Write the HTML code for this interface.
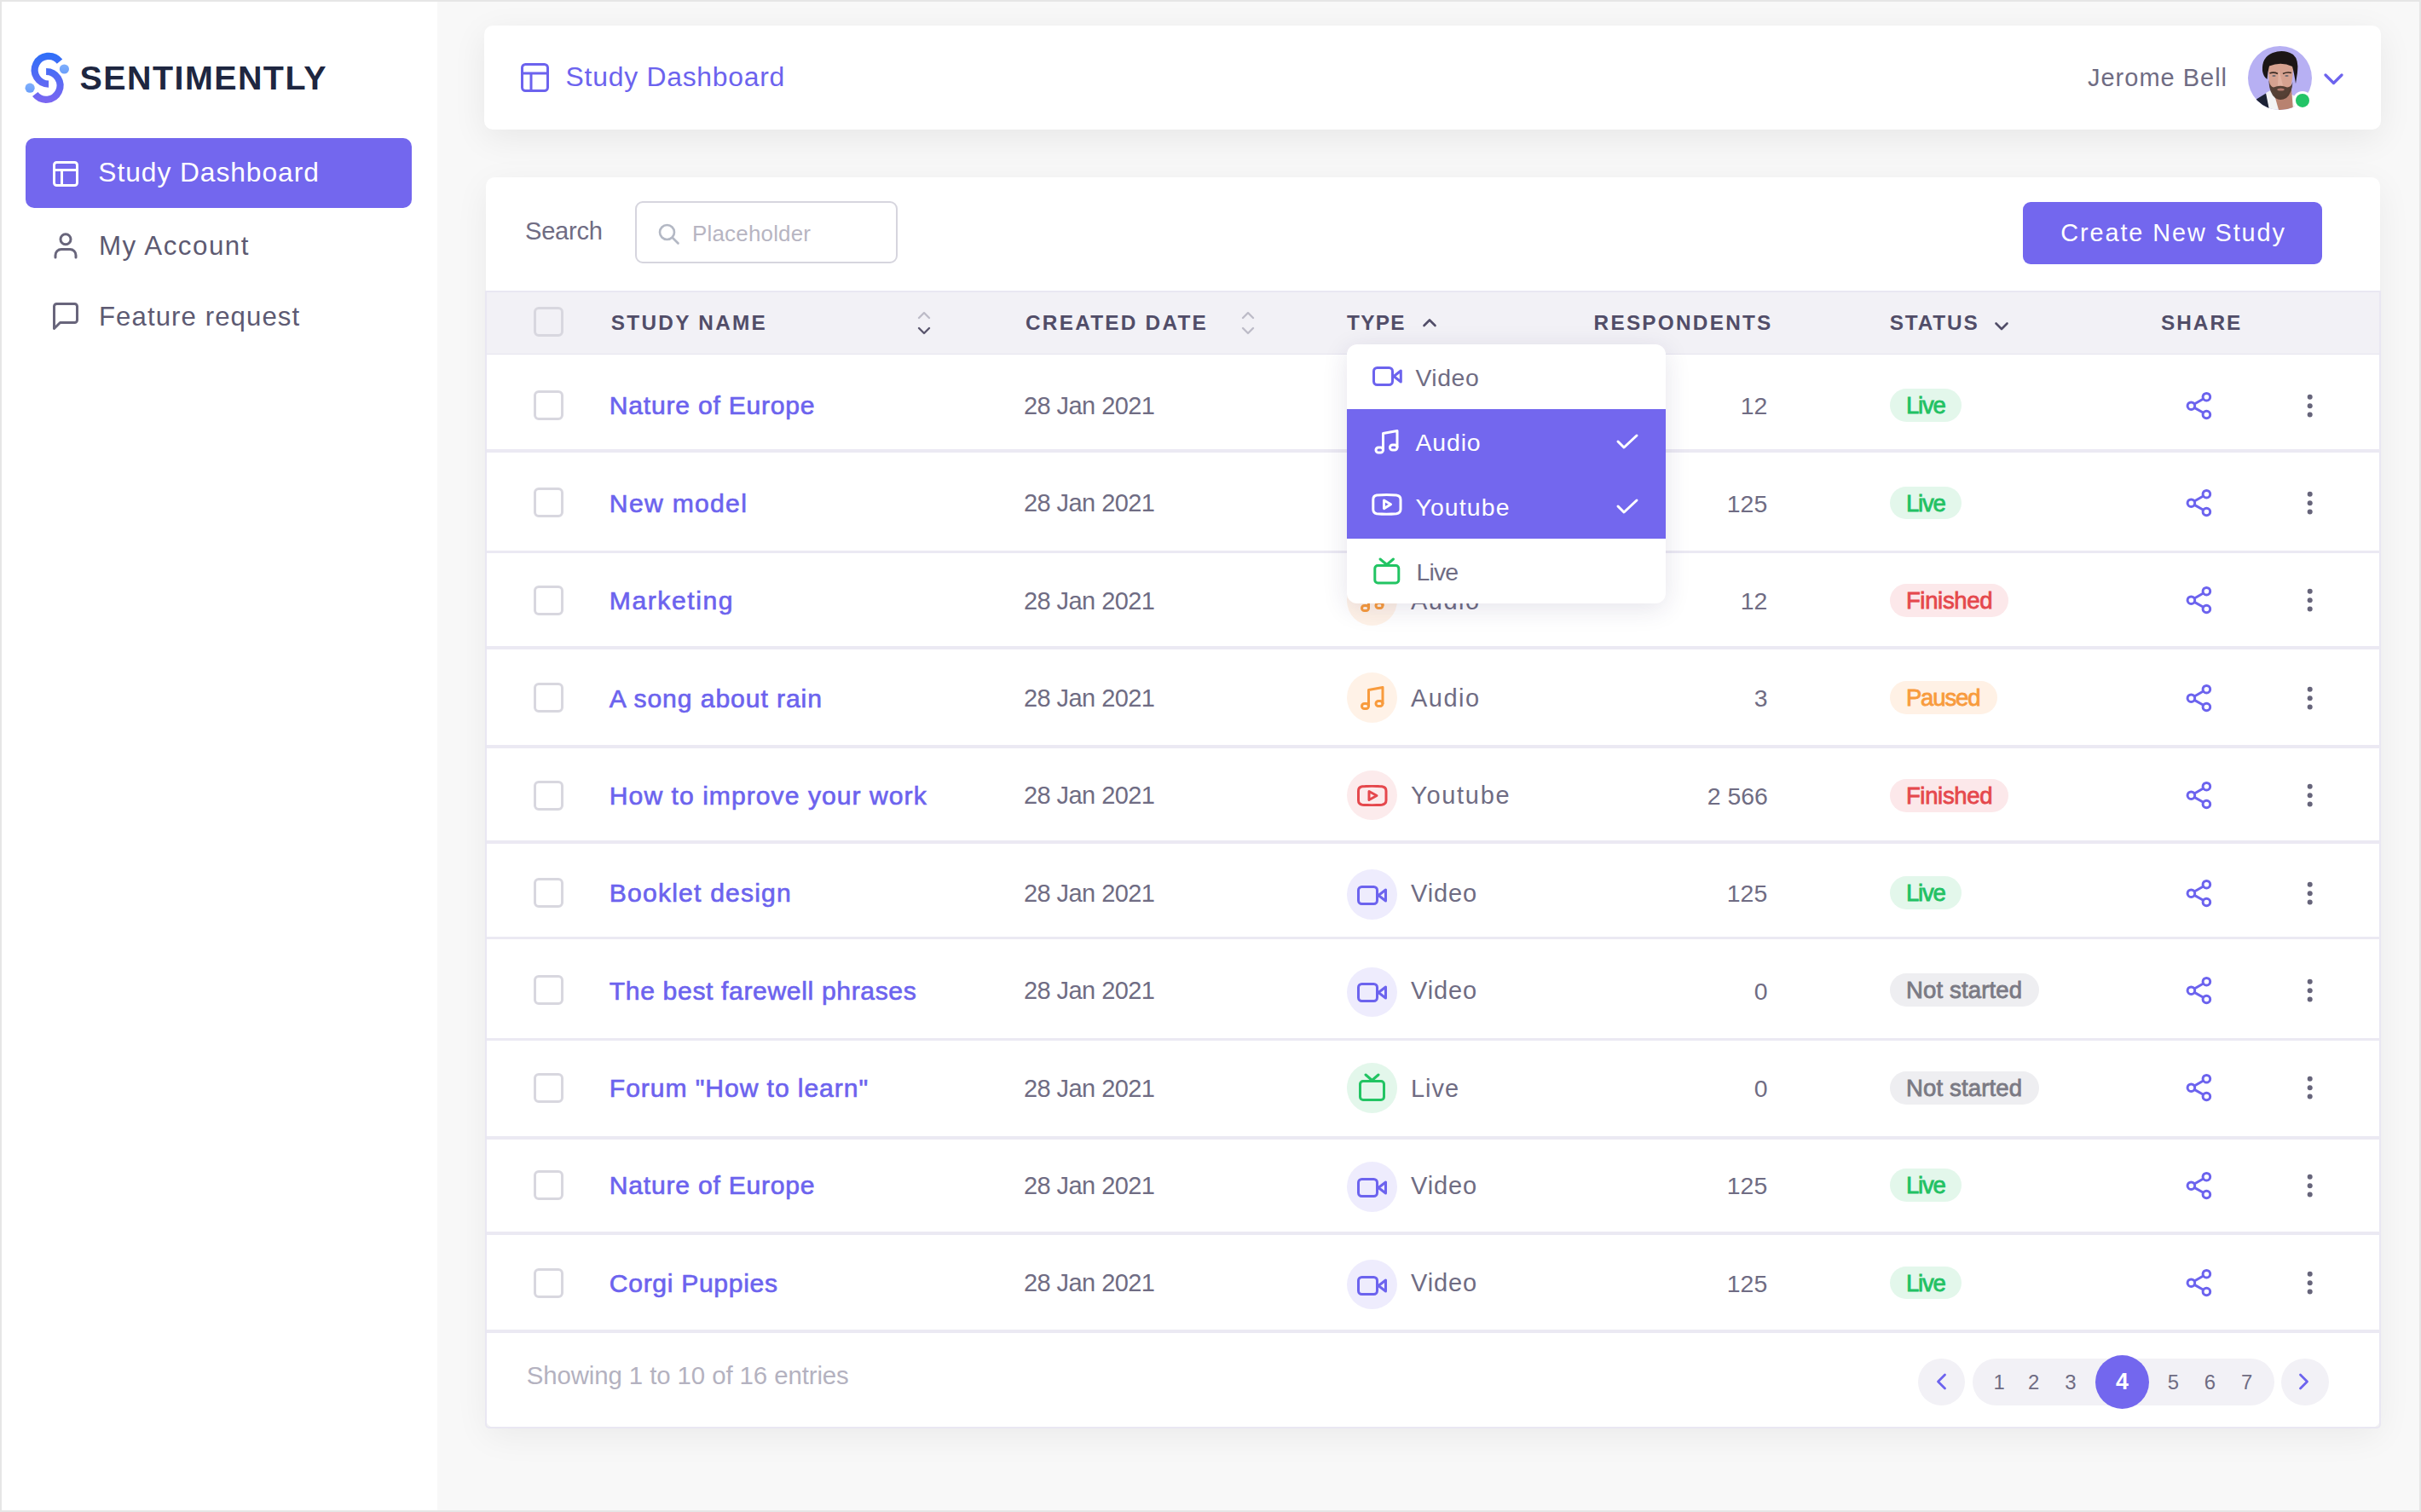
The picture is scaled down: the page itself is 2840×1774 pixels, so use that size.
<!DOCTYPE html>
<html><head><meta charset="utf-8"><title>Study Dashboard</title>
<style>
html,body{margin:0;padding:0;}
body{width:2840px;height:1774px;overflow:hidden;background:#e6e6e6;position:relative;font-family:"Liberation Sans",sans-serif;}
.t{position:absolute;white-space:nowrap;line-height:1;}
.b{position:absolute;}
</style></head><body>
<div class="b" style="left:2.00px;top:2.00px;width:511.00px;height:1770.00px;background:#fff;"></div>
<div class="b" style="left:513.00px;top:2.00px;width:2325.00px;height:1770.00px;background:#f8f8f8;"></div>
<svg class="b" style="left:24.00px;top:56.00px;" width="66.00" height="70.00" viewBox="24 56 66 70">
<defs><linearGradient id="lg" gradientUnits="userSpaceOnUse" x1="0" y1="61" x2="0" y2="121"><stop offset="0" stop-color="#2c6ff8"/><stop offset="1" stop-color="#7c66f1"/></linearGradient>
<linearGradient id="lg2" x1="0" y1="0" x2="0" y2="1"><stop offset="0" stop-color="#80b0fc"/><stop offset="1" stop-color="#6a9efa"/></linearGradient></defs>
<path d="M70.02 72.10 A16.4 16.4 0 1 0 57.1 98.6" fill="none" stroke="url(#lg)" stroke-width="8.2"/>
<path d="M54.1 84.0 A16.4 16.4 0 1 1 41.23 110.56" fill="none" stroke="url(#lg)" stroke-width="8.2"/>
<circle cx="75.4" cy="81" r="5.6" fill="url(#lg2)"/>
<circle cx="35.1" cy="103.2" r="5.6" fill="url(#lg2)"/>
</svg>
<div class="t" style="left:93.50px;top:71.69px;font-size:39.42px;color:#1e2640;font-weight:bold;letter-spacing:1.470px;">SENTIMENTLY</div>
<div class="b" style="left:29.70px;top:162.20px;width:453.10px;height:82.20px;background:#7367ee;border-radius:10px;"></div>
<svg class="b" style="left:62.00px;top:189.00px;" width="30.00" height="30.00" viewBox="0 0 30 30"><rect x="1.5" y="1.5" width="27" height="27" rx="3" fill="none" stroke="#fff" stroke-width="3"/><path d="M1.5 10.5H28.5M10.5 10.5V28.5" stroke="#fff" stroke-width="3"/></svg>
<div class="t" style="left:115.30px;top:187.42px;font-size:31.74px;color:#fff;letter-spacing:0.950px;">Study Dashboard</div>
<svg class="b" style="left:62.00px;top:272.00px;" width="30.00" height="32.00" viewBox="0 0 30 32"><circle cx="15" cy="8.8" r="6" fill="none" stroke="#68657b" stroke-width="3"/><path d="M3 30V27.5a7 7 0 0 1 7-7h10a7 7 0 0 1 7 7V30" stroke-linecap="round" fill="none" stroke="#68657b" stroke-width="3"/></svg>
<div class="t" style="left:116.00px;top:272.79px;font-size:31.30px;color:#5d5a72;letter-spacing:1.522px;">My Account</div>
<svg class="b" style="left:62.00px;top:355.00px;" width="30.00" height="32.00" viewBox="0 0 30 32"><path d="M1.5 30.5V4.5a3 3 0 0 1 3-3h21a3 3 0 0 1 3 3v16a3 3 0 0 1-3 3H8.5z" fill="none" stroke="#68657b" stroke-width="3" stroke-linejoin="round"/></svg>
<div class="t" style="left:116.00px;top:355.51px;font-size:31.16px;color:#5d5a72;letter-spacing:1.086px;">Feature request</div>
<div class="b" style="left:568.00px;top:30.00px;width:2225.00px;height:122.00px;background:#fff;border-radius:10px;box-shadow:0 10px 40px rgba(0,0,0,0.07);"></div>
<svg class="b" style="left:611.00px;top:74.00px;" width="33.00" height="34.00" viewBox="0 0 33 34"><rect x="1.5" y="1.5" width="30" height="31" rx="4" fill="none" stroke="#6c63ee" stroke-width="3"/><path d="M1.5 12H31.5M12 12V32.5" stroke="#6c63ee" stroke-width="3"/></svg>
<div class="t" style="left:663.60px;top:74.90px;font-size:31.88px;color:#6c63ee;letter-spacing:0.743px;">Study Dashboard</div>
<div class="t" style="left:2449.00px;top:77.36px;font-size:28.99px;color:#6f6c83;letter-spacing:1.000px;">Jerome Bell</div>
<svg class="b" style="left:2636.80px;top:53.70px;" width="75.00" height="75.00" viewBox="0 0 75 75">
<defs><clipPath id="av"><circle cx="37.5" cy="37.5" r="37.5"/></clipPath>
<filter id="bl" x="-10%" y="-10%" width="120%" height="120%"><feGaussianBlur stdDeviation="0.6"/></filter></defs>
<g clip-path="url(#av)">
<rect width="75" height="75" fill="#b7b0f3"/>
<g filter="url(#bl)">
<path d="M4 66 L22 55 L26 75 L0 75Z" fill="#1c2436"/>
<path d="M21 55 L30 50 L38 75 L25 75Z" fill="#f3f3f5"/>
<path d="M50 56 L57 60 L62 75 L48 75Z" fill="#f3f3f5"/>
<path d="M29 50 L51 50 L53 75 L36 75 Z" fill="#b88270"/>
<path d="M23.5 20 Q23 46 30 56 Q37 63 45 57 Q53 49 53 21 Q38 14 23.5 20 Z" fill="#d6a290"/>
<path d="M36 27 L35 46 Q38 48 41 46 Z" fill="#e7b9a8" opacity="0.7"/>
<path d="M24.5 42 Q25 55 32 61 Q38 65 45 61 Q52 55 52.5 42 Q51 48 46 48.5 Q38 45 30 48.5 Q26 48 24.5 40 Z" fill="#4a362d" opacity="0.92"/>
<ellipse cx="38.5" cy="51" rx="4.2" ry="1.6" fill="#b37a6e"/>
<path d="M25.5 32 Q30 30 35 32.5" stroke="#3a2a22" stroke-width="1.6" fill="none"/>
<path d="M41 32.5 Q46 30 51 31.5" stroke="#3a2a22" stroke-width="1.6" fill="none"/>
<ellipse cx="30.5" cy="35" rx="2.2" ry="1" fill="#6d6a70"/>
<ellipse cx="45.5" cy="35" rx="2.2" ry="1" fill="#6d6a70"/>
<path d="M17 29 Q16 13 29 8 Q42 3 53 10 Q60 16 58 31 L56 44 Q54 31 52 24 Q39 18 25 23.5 Q23 31 22.5 39 Q18 36 17 29 Z" fill="#1b1614"/>
</g></g>
<circle cx="64" cy="63.9" r="11" fill="#fff"/>
<circle cx="64" cy="63.9" r="8" fill="#23c467"/>
</svg>
<svg class="b" style="left:2726.00px;top:86.00px;" width="23.00" height="14.00" viewBox="0 0 23 14"><path d="M2 2L11.5 11.5L21 2" fill="none" stroke="#6c63ee" stroke-width="3.2" stroke-linecap="round" stroke-linejoin="round"/></svg>
<div class="b" style="left:570.00px;top:207.50px;width:2222.00px;height:1467.50px;background:#fff;border-radius:10px;box-shadow:0 10px 40px rgba(0,0,0,0.06);"></div>
<div class="t" style="left:616.00px;top:256.74px;font-size:29.13px;color:#6f6c83;letter-spacing:-0.260px;">Search</div>
<div class="b" style="left:744.50px;top:235.70px;width:308.90px;height:73.60px;border:2px solid #d6d5de;border-radius:9px;box-sizing:border-box;"></div>
<svg class="b" style="left:772.00px;top:262.00px;" width="26.00" height="26.00" viewBox="0 0 26 26"><circle cx="10.5" cy="10.5" r="8.5" fill="none" stroke="#b3b8c4" stroke-width="2.6"/><path d="M17 17L23.5 23.5" stroke="#b3b8c4" stroke-width="2.6" stroke-linecap="round"/></svg>
<div class="t" style="left:812.00px;top:261.65px;font-size:25.94px;color:#b7b5c2;letter-spacing:0.200px;">Placeholder</div>
<div class="b" style="left:2372.70px;top:237.00px;width:350.90px;height:72.60px;background:#7367ee;border-radius:9px;"></div>
<div class="t" style="left:2417.30px;top:258.79px;font-size:28.84px;color:#fff;letter-spacing:1.913px;">Create New Study</div>
<div class="b" style="left:570.00px;top:341.00px;width:2222.00px;height:75.00px;background:#f2f1f6;border-bottom:1.5px solid #e6e4ef;box-sizing:border-box;"></div>
<div class="b" style="left:625.50px;top:359.50px;width:35.00px;height:35.00px;border:3px solid #d8d7df;border-radius:6px;box-sizing:border-box;"></div>
<div class="t" style="left:716.80px;top:366.80px;font-size:24.35px;color:#514d68;font-weight:bold;letter-spacing:2.278px;">STUDY NAME</div>
<div class="t" style="left:1203.00px;top:366.80px;font-size:24.35px;color:#514d68;font-weight:bold;letter-spacing:2.245px;">CREATED DATE</div>
<div class="t" style="left:1580.00px;top:366.80px;font-size:24.35px;color:#514d68;font-weight:bold;letter-spacing:1.333px;">TYPE</div>
<div class="t" style="left:1869.60px;top:366.80px;font-size:24.35px;color:#514d68;font-weight:bold;letter-spacing:2.240px;">RESPONDENTS</div>
<div class="t" style="left:2216.70px;top:366.80px;font-size:24.35px;color:#514d68;font-weight:bold;letter-spacing:1.860px;">STATUS</div>
<div class="t" style="left:2535.00px;top:366.80px;font-size:24.35px;color:#514d68;font-weight:bold;letter-spacing:2.000px;">SHARE</div>
<svg class="b" style="left:1076.00px;top:363.00px;" width="16.00" height="32.00" viewBox="0 0 16 32"><path d="M2 10L8 4L14 10" fill="none" stroke="#bdbcc8" stroke-width="2.4" stroke-linecap="round" stroke-linejoin="round"/><path d="M2 22L8 28L14 22" fill="none" stroke="#5a566e" stroke-width="2.4" stroke-linecap="round" stroke-linejoin="round"/></svg>
<svg class="b" style="left:1456.00px;top:363.00px;" width="16.00" height="32.00" viewBox="0 0 16 32"><path d="M2 10L8 4L14 10" fill="none" stroke="#bdbcc8" stroke-width="2.4" stroke-linecap="round" stroke-linejoin="round"/><path d="M2 22L8 28L14 22" fill="none" stroke="#bdbcc8" stroke-width="2.4" stroke-linecap="round" stroke-linejoin="round"/></svg>
<svg class="b" style="left:1668.00px;top:371.00px;" width="18.00" height="14.00" viewBox="0 0 18 14"><path d="M2.5 11L9 4.5L15.5 11" fill="none" stroke="#514d68" stroke-width="2.6" stroke-linecap="round" stroke-linejoin="round"/></svg>
<svg class="b" style="left:2339.00px;top:376.00px;" width="18.00" height="14.00" viewBox="0 0 18 14"><path d="M2.5 3.5L9 10L15.5 3.5" fill="none" stroke="#514d68" stroke-width="2.6" stroke-linecap="round" stroke-linejoin="round"/></svg>
<div class="b" style="left:569.00px;top:340.50px;width:2224.00px;height:1335.50px;border:2px solid #e9e7f2;border-radius:0 0 5px 5px;box-sizing:border-box;"></div>
<div class="b" style="left:571.00px;top:527.10px;width:2221.00px;height:3.80px;background:#ebe9f3;"></div>
<div class="b" style="left:571.00px;top:645.50px;width:2221.00px;height:3.80px;background:#ebe9f3;"></div>
<div class="b" style="left:571.00px;top:758.10px;width:2221.00px;height:3.80px;background:#ebe9f3;"></div>
<div class="b" style="left:571.00px;top:873.80px;width:2221.00px;height:3.80px;background:#ebe9f3;"></div>
<div class="b" style="left:571.00px;top:986.10px;width:2221.00px;height:3.80px;background:#ebe9f3;"></div>
<div class="b" style="left:571.00px;top:1098.60px;width:2221.00px;height:3.80px;background:#ebe9f3;"></div>
<div class="b" style="left:571.00px;top:1217.60px;width:2221.00px;height:3.80px;background:#ebe9f3;"></div>
<div class="b" style="left:571.00px;top:1333.40px;width:2221.00px;height:3.80px;background:#ebe9f3;"></div>
<div class="b" style="left:571.00px;top:1445.10px;width:2221.00px;height:3.80px;background:#ebe9f3;"></div>
<div class="b" style="left:571.00px;top:1560.10px;width:2221.00px;height:3.80px;background:#ebe9f3;"></div>
<div class="b" style="left:625.50px;top:458.10px;width:35.00px;height:35.00px;border:3px solid #d8d7df;border-radius:6px;box-sizing:border-box;"></div>
<div class="t" style="left:714.83px;top:461.38px;font-size:30.14px;color:#6c63ee;-webkit-text-stroke:0.65px #6c63ee;letter-spacing:0.757px;">Nature of Europe</div>
<div class="t" style="left:1201.00px;top:461.96px;font-size:28.99px;color:#6f6c83;letter-spacing:-0.560px;">28 Jan 2021</div>
<div class="b" style="left:1580.00px;top:448.30px;width:59.00px;height:58.60px;background:#eeecfd;border-radius:50%;"></div>
<svg class="b" style="left:1591.70px;top:467.10px;" width="36.00" height="23.00" viewBox="0 0 36 23"><rect x="1.5" y="1.5" width="22" height="20" rx="4" fill="none" stroke="#6c63ee" stroke-width="3"/><path d="M25 11.5L33.5 5V18Z" fill="none" stroke="#6c63ee" stroke-width="3" stroke-linejoin="round"/></svg>
<div class="t" style="left:1655.00px;top:461.96px;font-size:28.99px;color:#6f6c83;letter-spacing:0.850px;">Video</div>
<div class="t" style="left:2041.80px;top:462.26px;font-size:28.41px;color:#6f6c83;">12</div>
<div class="b" style="left:2217.00px;top:456.20px;width:84.00px;height:38.80px;background:#e3f7eb;border-radius:20px;"></div>
<div class="t" style="left:2235.90px;top:462.19px;font-size:27.54px;color:#22c163;-webkit-text-stroke:0.8px #22c163;letter-spacing:-1.167px;">Live</div>
<svg class="b" style="left:2562.00px;top:456.60px;" width="36.00" height="38.00" viewBox="0 0 36 38"><g fill="none" stroke="#6c63ee" stroke-width="3"><circle cx="26.4" cy="8.7" r="4.3"/><circle cx="8.4" cy="19.2" r="4.3"/><circle cx="26.4" cy="29.5" r="4.3"/><path d="M12.2 17L22.6 11M12.2 21.4L22.6 27.3"/></g></svg>
<svg class="b" style="left:2703.00px;top:459.60px;" width="14.00" height="32.00" viewBox="0 0 14 32"><g fill="#66647a"><circle cx="6.7" cy="5.8" r="3"/><circle cx="6.7" cy="16.2" r="3"/><circle cx="6.7" cy="26.5" r="3"/></g></svg>
<div class="b" style="left:625.50px;top:572.48px;width:35.00px;height:35.00px;border:3px solid #d8d7df;border-radius:6px;box-sizing:border-box;"></div>
<div class="t" style="left:714.83px;top:575.76px;font-size:30.14px;color:#6c63ee;-webkit-text-stroke:0.65px #6c63ee;letter-spacing:1.294px;">New model</div>
<div class="t" style="left:1201.00px;top:576.34px;font-size:28.99px;color:#6f6c83;letter-spacing:-0.560px;">28 Jan 2021</div>
<div class="b" style="left:1580.00px;top:562.68px;width:59.00px;height:58.60px;background:#eeecfd;border-radius:50%;"></div>
<svg class="b" style="left:1591.70px;top:581.48px;" width="36.00" height="23.00" viewBox="0 0 36 23"><rect x="1.5" y="1.5" width="22" height="20" rx="4" fill="none" stroke="#6c63ee" stroke-width="3"/><path d="M25 11.5L33.5 5V18Z" fill="none" stroke="#6c63ee" stroke-width="3" stroke-linejoin="round"/></svg>
<div class="t" style="left:1655.00px;top:576.34px;font-size:28.99px;color:#6f6c83;letter-spacing:0.850px;">Video</div>
<div class="t" style="left:2025.80px;top:576.64px;font-size:28.41px;color:#6f6c83;">125</div>
<div class="b" style="left:2217.00px;top:570.58px;width:84.00px;height:38.80px;background:#e3f7eb;border-radius:20px;"></div>
<div class="t" style="left:2235.90px;top:576.57px;font-size:27.54px;color:#22c163;-webkit-text-stroke:0.8px #22c163;letter-spacing:-1.167px;">Live</div>
<svg class="b" style="left:2562.00px;top:570.98px;" width="36.00" height="38.00" viewBox="0 0 36 38"><g fill="none" stroke="#6c63ee" stroke-width="3"><circle cx="26.4" cy="8.7" r="4.3"/><circle cx="8.4" cy="19.2" r="4.3"/><circle cx="26.4" cy="29.5" r="4.3"/><path d="M12.2 17L22.6 11M12.2 21.4L22.6 27.3"/></g></svg>
<svg class="b" style="left:2703.00px;top:573.98px;" width="14.00" height="32.00" viewBox="0 0 14 32"><g fill="#66647a"><circle cx="6.7" cy="5.8" r="3"/><circle cx="6.7" cy="16.2" r="3"/><circle cx="6.7" cy="26.5" r="3"/></g></svg>
<div class="b" style="left:625.50px;top:686.86px;width:35.00px;height:35.00px;border:3px solid #d8d7df;border-radius:6px;box-sizing:border-box;"></div>
<div class="t" style="left:714.83px;top:690.14px;font-size:30.14px;color:#6c63ee;-webkit-text-stroke:0.65px #6c63ee;letter-spacing:1.544px;">Marketing</div>
<div class="t" style="left:1201.00px;top:690.72px;font-size:28.99px;color:#6f6c83;letter-spacing:-0.560px;">28 Jan 2021</div>
<div class="b" style="left:1580.00px;top:675.06px;width:59.00px;height:58.60px;background:#fff2e7;border-radius:50%;"></div>
<svg class="b" style="left:1595.50px;top:690.36px;" width="28.00" height="29.00" viewBox="0 0 28 29"><path d="M9.5 24V4.5L26 1.5V21" fill="none" stroke="#f89b3d" stroke-width="3" stroke-linejoin="round"/><rect x="1.5" y="20.5" width="8" height="6" rx="3" fill="none" stroke="#f89b3d" stroke-width="3"/><rect x="18" y="17.5" width="8" height="6" rx="3" fill="none" stroke="#f89b3d" stroke-width="3"/></svg>
<div class="t" style="left:1655.00px;top:690.72px;font-size:28.99px;color:#6f6c83;letter-spacing:1.500px;">Audio</div>
<div class="t" style="left:2041.80px;top:691.02px;font-size:28.41px;color:#6f6c83;">12</div>
<div class="b" style="left:2217.00px;top:684.96px;width:139.00px;height:38.80px;background:#fce8ea;border-radius:20px;"></div>
<div class="t" style="left:2235.90px;top:690.95px;font-size:27.54px;color:#e5484d;-webkit-text-stroke:0.8px #e5484d;letter-spacing:-0.343px;">Finished</div>
<svg class="b" style="left:2562.00px;top:685.36px;" width="36.00" height="38.00" viewBox="0 0 36 38"><g fill="none" stroke="#6c63ee" stroke-width="3"><circle cx="26.4" cy="8.7" r="4.3"/><circle cx="8.4" cy="19.2" r="4.3"/><circle cx="26.4" cy="29.5" r="4.3"/><path d="M12.2 17L22.6 11M12.2 21.4L22.6 27.3"/></g></svg>
<svg class="b" style="left:2703.00px;top:688.36px;" width="14.00" height="32.00" viewBox="0 0 14 32"><g fill="#66647a"><circle cx="6.7" cy="5.8" r="3"/><circle cx="6.7" cy="16.2" r="3"/><circle cx="6.7" cy="26.5" r="3"/></g></svg>
<div class="b" style="left:625.50px;top:801.24px;width:35.00px;height:35.00px;border:3px solid #d8d7df;border-radius:6px;box-sizing:border-box;"></div>
<div class="t" style="left:714.83px;top:804.52px;font-size:30.14px;color:#6c63ee;-webkit-text-stroke:0.65px #6c63ee;letter-spacing:0.916px;">A song about rain</div>
<div class="t" style="left:1201.00px;top:805.10px;font-size:28.99px;color:#6f6c83;letter-spacing:-0.560px;">28 Jan 2021</div>
<div class="b" style="left:1580.00px;top:789.44px;width:59.00px;height:58.60px;background:#fff2e7;border-radius:50%;"></div>
<svg class="b" style="left:1595.50px;top:804.74px;" width="28.00" height="29.00" viewBox="0 0 28 29"><path d="M9.5 24V4.5L26 1.5V21" fill="none" stroke="#f89b3d" stroke-width="3" stroke-linejoin="round"/><rect x="1.5" y="20.5" width="8" height="6" rx="3" fill="none" stroke="#f89b3d" stroke-width="3"/><rect x="18" y="17.5" width="8" height="6" rx="3" fill="none" stroke="#f89b3d" stroke-width="3"/></svg>
<div class="t" style="left:1655.00px;top:805.10px;font-size:28.99px;color:#6f6c83;letter-spacing:1.500px;">Audio</div>
<div class="t" style="left:2057.80px;top:805.40px;font-size:28.41px;color:#6f6c83;">3</div>
<div class="b" style="left:2217.00px;top:799.34px;width:126.00px;height:38.80px;background:#fff1e5;border-radius:20px;"></div>
<div class="t" style="left:2235.90px;top:805.33px;font-size:27.54px;color:#f89b3d;-webkit-text-stroke:0.8px #f89b3d;letter-spacing:-1.140px;">Paused</div>
<svg class="b" style="left:2562.00px;top:799.74px;" width="36.00" height="38.00" viewBox="0 0 36 38"><g fill="none" stroke="#6c63ee" stroke-width="3"><circle cx="26.4" cy="8.7" r="4.3"/><circle cx="8.4" cy="19.2" r="4.3"/><circle cx="26.4" cy="29.5" r="4.3"/><path d="M12.2 17L22.6 11M12.2 21.4L22.6 27.3"/></g></svg>
<svg class="b" style="left:2703.00px;top:802.74px;" width="14.00" height="32.00" viewBox="0 0 14 32"><g fill="#66647a"><circle cx="6.7" cy="5.8" r="3"/><circle cx="6.7" cy="16.2" r="3"/><circle cx="6.7" cy="26.5" r="3"/></g></svg>
<div class="b" style="left:625.50px;top:915.62px;width:35.00px;height:35.00px;border:3px solid #d8d7df;border-radius:6px;box-sizing:border-box;"></div>
<div class="t" style="left:714.83px;top:918.90px;font-size:30.14px;color:#6c63ee;-webkit-text-stroke:0.65px #6c63ee;letter-spacing:1.028px;">How to improve your work</div>
<div class="t" style="left:1201.00px;top:919.48px;font-size:28.99px;color:#6f6c83;letter-spacing:-0.560px;">28 Jan 2021</div>
<div class="b" style="left:1580.00px;top:903.82px;width:59.00px;height:58.60px;background:#fcebec;border-radius:50%;"></div>
<svg class="b" style="left:1592.00px;top:920.62px;" width="36.00" height="25.00" viewBox="0 0 36 25"><path d="M6 1.8Q17.5 0.8 29 1.8Q34 2.5 34 7V18Q34 22.5 29 23.2Q17.5 24.2 6 23.2Q1.5 22.5 1.5 18V7Q1.5 2.5 6 1.8Z" fill="none" stroke="#e5484d" stroke-width="3"/><path d="M14 7.5L23 12.5L14 17.5Z" fill="none" stroke="#e5484d" stroke-width="3" stroke-linejoin="round"/></svg>
<div class="t" style="left:1655.00px;top:919.48px;font-size:28.99px;color:#6f6c83;letter-spacing:1.717px;">Youtube</div>
<div class="t" style="left:2002.80px;top:919.78px;font-size:28.41px;color:#6f6c83;">2 566</div>
<div class="b" style="left:2217.00px;top:913.72px;width:139.00px;height:38.80px;background:#fce8ea;border-radius:20px;"></div>
<div class="t" style="left:2235.90px;top:919.71px;font-size:27.54px;color:#e5484d;-webkit-text-stroke:0.8px #e5484d;letter-spacing:-0.343px;">Finished</div>
<svg class="b" style="left:2562.00px;top:914.12px;" width="36.00" height="38.00" viewBox="0 0 36 38"><g fill="none" stroke="#6c63ee" stroke-width="3"><circle cx="26.4" cy="8.7" r="4.3"/><circle cx="8.4" cy="19.2" r="4.3"/><circle cx="26.4" cy="29.5" r="4.3"/><path d="M12.2 17L22.6 11M12.2 21.4L22.6 27.3"/></g></svg>
<svg class="b" style="left:2703.00px;top:917.12px;" width="14.00" height="32.00" viewBox="0 0 14 32"><g fill="#66647a"><circle cx="6.7" cy="5.8" r="3"/><circle cx="6.7" cy="16.2" r="3"/><circle cx="6.7" cy="26.5" r="3"/></g></svg>
<div class="b" style="left:625.50px;top:1030.00px;width:35.00px;height:35.00px;border:3px solid #d8d7df;border-radius:6px;box-sizing:border-box;"></div>
<div class="t" style="left:714.83px;top:1033.28px;font-size:30.14px;color:#6c63ee;-webkit-text-stroke:0.65px #6c63ee;letter-spacing:1.181px;">Booklet design</div>
<div class="t" style="left:1201.00px;top:1033.86px;font-size:28.99px;color:#6f6c83;letter-spacing:-0.560px;">28 Jan 2021</div>
<div class="b" style="left:1580.00px;top:1020.20px;width:59.00px;height:58.60px;background:#eeecfd;border-radius:50%;"></div>
<svg class="b" style="left:1591.70px;top:1039.00px;" width="36.00" height="23.00" viewBox="0 0 36 23"><rect x="1.5" y="1.5" width="22" height="20" rx="4" fill="none" stroke="#6c63ee" stroke-width="3"/><path d="M25 11.5L33.5 5V18Z" fill="none" stroke="#6c63ee" stroke-width="3" stroke-linejoin="round"/></svg>
<div class="t" style="left:1655.00px;top:1033.86px;font-size:28.99px;color:#6f6c83;letter-spacing:0.850px;">Video</div>
<div class="t" style="left:2025.80px;top:1034.16px;font-size:28.41px;color:#6f6c83;">125</div>
<div class="b" style="left:2217.00px;top:1028.10px;width:84.00px;height:38.80px;background:#e3f7eb;border-radius:20px;"></div>
<div class="t" style="left:2235.90px;top:1034.09px;font-size:27.54px;color:#22c163;-webkit-text-stroke:0.8px #22c163;letter-spacing:-1.167px;">Live</div>
<svg class="b" style="left:2562.00px;top:1028.50px;" width="36.00" height="38.00" viewBox="0 0 36 38"><g fill="none" stroke="#6c63ee" stroke-width="3"><circle cx="26.4" cy="8.7" r="4.3"/><circle cx="8.4" cy="19.2" r="4.3"/><circle cx="26.4" cy="29.5" r="4.3"/><path d="M12.2 17L22.6 11M12.2 21.4L22.6 27.3"/></g></svg>
<svg class="b" style="left:2703.00px;top:1031.50px;" width="14.00" height="32.00" viewBox="0 0 14 32"><g fill="#66647a"><circle cx="6.7" cy="5.8" r="3"/><circle cx="6.7" cy="16.2" r="3"/><circle cx="6.7" cy="26.5" r="3"/></g></svg>
<div class="b" style="left:625.50px;top:1144.38px;width:35.00px;height:35.00px;border:3px solid #d8d7df;border-radius:6px;box-sizing:border-box;"></div>
<div class="t" style="left:714.83px;top:1147.66px;font-size:30.14px;color:#6c63ee;-webkit-text-stroke:0.65px #6c63ee;letter-spacing:0.627px;">The best farewell phrases</div>
<div class="t" style="left:1201.00px;top:1148.24px;font-size:28.99px;color:#6f6c83;letter-spacing:-0.560px;">28 Jan 2021</div>
<div class="b" style="left:1580.00px;top:1134.58px;width:59.00px;height:58.60px;background:#eeecfd;border-radius:50%;"></div>
<svg class="b" style="left:1591.70px;top:1153.38px;" width="36.00" height="23.00" viewBox="0 0 36 23"><rect x="1.5" y="1.5" width="22" height="20" rx="4" fill="none" stroke="#6c63ee" stroke-width="3"/><path d="M25 11.5L33.5 5V18Z" fill="none" stroke="#6c63ee" stroke-width="3" stroke-linejoin="round"/></svg>
<div class="t" style="left:1655.00px;top:1148.24px;font-size:28.99px;color:#6f6c83;letter-spacing:0.850px;">Video</div>
<div class="t" style="left:2057.80px;top:1148.54px;font-size:28.41px;color:#6f6c83;">0</div>
<div class="b" style="left:2217.00px;top:1142.48px;width:175.00px;height:38.80px;background:#eeeef1;border-radius:20px;"></div>
<div class="t" style="left:2235.90px;top:1148.47px;font-size:27.54px;color:#7b7a84;-webkit-text-stroke:0.8px #7b7a84;letter-spacing:0.160px;">Not started</div>
<svg class="b" style="left:2562.00px;top:1142.88px;" width="36.00" height="38.00" viewBox="0 0 36 38"><g fill="none" stroke="#6c63ee" stroke-width="3"><circle cx="26.4" cy="8.7" r="4.3"/><circle cx="8.4" cy="19.2" r="4.3"/><circle cx="26.4" cy="29.5" r="4.3"/><path d="M12.2 17L22.6 11M12.2 21.4L22.6 27.3"/></g></svg>
<svg class="b" style="left:2703.00px;top:1145.88px;" width="14.00" height="32.00" viewBox="0 0 14 32"><g fill="#66647a"><circle cx="6.7" cy="5.8" r="3"/><circle cx="6.7" cy="16.2" r="3"/><circle cx="6.7" cy="26.5" r="3"/></g></svg>
<div class="b" style="left:625.50px;top:1258.76px;width:35.00px;height:35.00px;border:3px solid #d8d7df;border-radius:6px;box-sizing:border-box;"></div>
<div class="t" style="left:714.83px;top:1262.04px;font-size:30.14px;color:#6c63ee;-webkit-text-stroke:0.65px #6c63ee;letter-spacing:0.913px;">Forum "How to learn"</div>
<div class="t" style="left:1201.00px;top:1262.62px;font-size:28.99px;color:#6f6c83;letter-spacing:-0.560px;">28 Jan 2021</div>
<div class="b" style="left:1580.00px;top:1246.96px;width:59.00px;height:58.60px;background:#e3f7eb;border-radius:50%;"></div>
<svg class="b" style="left:1594.00px;top:1259.26px;" width="31.00" height="33.00" viewBox="0 0 31 33"><rect x="1.5" y="9.5" width="28" height="22" rx="3.5" fill="none" stroke="#22c463" stroke-width="3"/><path d="M8 2L15.5 8.5L23 2" fill="none" stroke="#22c463" stroke-width="3" stroke-linecap="round" stroke-linejoin="round"/></svg>
<div class="t" style="left:1655.00px;top:1262.62px;font-size:28.99px;color:#6f6c83;letter-spacing:1.000px;">Live</div>
<div class="t" style="left:2057.80px;top:1262.92px;font-size:28.41px;color:#6f6c83;">0</div>
<div class="b" style="left:2217.00px;top:1256.86px;width:175.00px;height:38.80px;background:#eeeef1;border-radius:20px;"></div>
<div class="t" style="left:2235.90px;top:1262.85px;font-size:27.54px;color:#7b7a84;-webkit-text-stroke:0.8px #7b7a84;letter-spacing:0.160px;">Not started</div>
<svg class="b" style="left:2562.00px;top:1257.26px;" width="36.00" height="38.00" viewBox="0 0 36 38"><g fill="none" stroke="#6c63ee" stroke-width="3"><circle cx="26.4" cy="8.7" r="4.3"/><circle cx="8.4" cy="19.2" r="4.3"/><circle cx="26.4" cy="29.5" r="4.3"/><path d="M12.2 17L22.6 11M12.2 21.4L22.6 27.3"/></g></svg>
<svg class="b" style="left:2703.00px;top:1260.26px;" width="14.00" height="32.00" viewBox="0 0 14 32"><g fill="#66647a"><circle cx="6.7" cy="5.8" r="3"/><circle cx="6.7" cy="16.2" r="3"/><circle cx="6.7" cy="26.5" r="3"/></g></svg>
<div class="b" style="left:625.50px;top:1373.14px;width:35.00px;height:35.00px;border:3px solid #d8d7df;border-radius:6px;box-sizing:border-box;"></div>
<div class="t" style="left:714.83px;top:1376.42px;font-size:30.14px;color:#6c63ee;-webkit-text-stroke:0.65px #6c63ee;letter-spacing:0.757px;">Nature of Europe</div>
<div class="t" style="left:1201.00px;top:1377.00px;font-size:28.99px;color:#6f6c83;letter-spacing:-0.560px;">28 Jan 2021</div>
<div class="b" style="left:1580.00px;top:1363.34px;width:59.00px;height:58.60px;background:#eeecfd;border-radius:50%;"></div>
<svg class="b" style="left:1591.70px;top:1382.14px;" width="36.00" height="23.00" viewBox="0 0 36 23"><rect x="1.5" y="1.5" width="22" height="20" rx="4" fill="none" stroke="#6c63ee" stroke-width="3"/><path d="M25 11.5L33.5 5V18Z" fill="none" stroke="#6c63ee" stroke-width="3" stroke-linejoin="round"/></svg>
<div class="t" style="left:1655.00px;top:1377.00px;font-size:28.99px;color:#6f6c83;letter-spacing:0.850px;">Video</div>
<div class="t" style="left:2025.80px;top:1377.30px;font-size:28.41px;color:#6f6c83;">125</div>
<div class="b" style="left:2217.00px;top:1371.24px;width:84.00px;height:38.80px;background:#e3f7eb;border-radius:20px;"></div>
<div class="t" style="left:2235.90px;top:1377.23px;font-size:27.54px;color:#22c163;-webkit-text-stroke:0.8px #22c163;letter-spacing:-1.167px;">Live</div>
<svg class="b" style="left:2562.00px;top:1371.64px;" width="36.00" height="38.00" viewBox="0 0 36 38"><g fill="none" stroke="#6c63ee" stroke-width="3"><circle cx="26.4" cy="8.7" r="4.3"/><circle cx="8.4" cy="19.2" r="4.3"/><circle cx="26.4" cy="29.5" r="4.3"/><path d="M12.2 17L22.6 11M12.2 21.4L22.6 27.3"/></g></svg>
<svg class="b" style="left:2703.00px;top:1374.64px;" width="14.00" height="32.00" viewBox="0 0 14 32"><g fill="#66647a"><circle cx="6.7" cy="5.8" r="3"/><circle cx="6.7" cy="16.2" r="3"/><circle cx="6.7" cy="26.5" r="3"/></g></svg>
<div class="b" style="left:625.50px;top:1487.52px;width:35.00px;height:35.00px;border:3px solid #d8d7df;border-radius:6px;box-sizing:border-box;"></div>
<div class="t" style="left:714.83px;top:1490.80px;font-size:30.14px;color:#6c63ee;-webkit-text-stroke:0.65px #6c63ee;letter-spacing:0.663px;">Corgi Puppies</div>
<div class="t" style="left:1201.00px;top:1491.38px;font-size:28.99px;color:#6f6c83;letter-spacing:-0.560px;">28 Jan 2021</div>
<div class="b" style="left:1580.00px;top:1477.72px;width:59.00px;height:58.60px;background:#eeecfd;border-radius:50%;"></div>
<svg class="b" style="left:1591.70px;top:1496.52px;" width="36.00" height="23.00" viewBox="0 0 36 23"><rect x="1.5" y="1.5" width="22" height="20" rx="4" fill="none" stroke="#6c63ee" stroke-width="3"/><path d="M25 11.5L33.5 5V18Z" fill="none" stroke="#6c63ee" stroke-width="3" stroke-linejoin="round"/></svg>
<div class="t" style="left:1655.00px;top:1491.38px;font-size:28.99px;color:#6f6c83;letter-spacing:0.850px;">Video</div>
<div class="t" style="left:2025.80px;top:1491.68px;font-size:28.41px;color:#6f6c83;">125</div>
<div class="b" style="left:2217.00px;top:1485.62px;width:84.00px;height:38.80px;background:#e3f7eb;border-radius:20px;"></div>
<div class="t" style="left:2235.90px;top:1491.61px;font-size:27.54px;color:#22c163;-webkit-text-stroke:0.8px #22c163;letter-spacing:-1.167px;">Live</div>
<svg class="b" style="left:2562.00px;top:1486.02px;" width="36.00" height="38.00" viewBox="0 0 36 38"><g fill="none" stroke="#6c63ee" stroke-width="3"><circle cx="26.4" cy="8.7" r="4.3"/><circle cx="8.4" cy="19.2" r="4.3"/><circle cx="26.4" cy="29.5" r="4.3"/><path d="M12.2 17L22.6 11M12.2 21.4L22.6 27.3"/></g></svg>
<svg class="b" style="left:2703.00px;top:1489.02px;" width="14.00" height="32.00" viewBox="0 0 14 32"><g fill="#66647a"><circle cx="6.7" cy="5.8" r="3"/><circle cx="6.7" cy="16.2" r="3"/><circle cx="6.7" cy="26.5" r="3"/></g></svg>
<div class="t" style="left:617.70px;top:1599.29px;font-size:29.42px;color:#b4b2c0;letter-spacing:-0.100px;">Showing 1 to 10 of 16 entries</div>
<div class="b" style="left:2250.40px;top:1593.60px;width:55.10px;height:55.20px;background:#f2f1f6;border-radius:50%;"></div>
<div class="b" style="left:2313.60px;top:1593.60px;width:354.90px;height:55.20px;background:#f2f1f6;border-radius:28px;"></div>
<div class="b" style="left:2676.00px;top:1593.60px;width:55.70px;height:55.20px;background:#f2f1f6;border-radius:50%;"></div>
<div class="b" style="left:2457.70px;top:1590.00px;width:63.00px;height:63.00px;background:#7367ee;border-radius:50%;"></div>
<div class="t" style="left:2338.50px;top:1610.17px;font-size:23.91px;color:#6f6c83;">1</div>
<div class="t" style="left:2378.90px;top:1610.17px;font-size:23.91px;color:#6f6c83;">2</div>
<div class="t" style="left:2422.30px;top:1610.17px;font-size:23.91px;color:#6f6c83;">3</div>
<div class="t" style="left:2542.70px;top:1610.17px;font-size:23.91px;color:#6f6c83;">5</div>
<div class="t" style="left:2585.80px;top:1610.17px;font-size:23.91px;color:#6f6c83;">6</div>
<div class="t" style="left:2628.90px;top:1610.17px;font-size:23.91px;color:#6f6c83;">7</div>
<div class="t" style="left:2482.00px;top:1608.21px;font-size:26.81px;color:#fff;font-weight:bold;">4</div>
<svg class="b" style="left:2268.00px;top:1610.00px;" width="18.00" height="22.00" viewBox="0 0 18 22"><path d="M13.5 3L5.5 11L13.5 19" fill="none" stroke="#6c63ee" stroke-width="2.8" stroke-linecap="round" stroke-linejoin="round"/></svg>
<svg class="b" style="left:2694.00px;top:1610.00px;" width="18.00" height="22.00" viewBox="0 0 18 22"><path d="M4.5 3L12.5 11L4.5 19" fill="none" stroke="#6c63ee" stroke-width="2.8" stroke-linecap="round" stroke-linejoin="round"/></svg>
<div class="b" style="left:1580px;top:404.2px;width:374px;height:303.4px;background:#fff;border-radius:12px;box-shadow:0 6px 30px rgba(40,30,90,0.12);overflow:hidden;"><div style="position:absolute;left:0;top:75.8px;width:374px;height:151.6px;background:#7367ee;"></div></div>
<svg class="b" style="left:1610.00px;top:430.40px;" width="36.00" height="23.00" viewBox="0 0 36 23"><rect x="1.5" y="1.5" width="22" height="20" rx="4" fill="none" stroke="#6c63ee" stroke-width="3"/><path d="M25 11.5L33.3 5V18Z" fill="none" stroke="#6c63ee" stroke-width="3" stroke-linejoin="round"/></svg>
<div class="t" style="left:1660.40px;top:429.16px;font-size:28.41px;color:#6f6c83;letter-spacing:0.550px;">Video</div>
<svg class="b" style="left:1612.00px;top:503.00px;" width="30.00" height="30.00" viewBox="0 0 30 30"><path d="M10.5 25.5V5.5L27 2.5V22" fill="none" stroke="#fff" stroke-width="3" stroke-linejoin="round"/><rect x="2" y="22" width="8.5" height="6" rx="3" fill="none" stroke="#fff" stroke-width="3"/><rect x="18.5" y="19" width="8.5" height="6" rx="3" fill="none" stroke="#fff" stroke-width="3"/></svg>
<div class="t" style="left:1660.40px;top:505.46px;font-size:28.41px;color:#fff;letter-spacing:0.900px;">Audio</div>
<svg class="b" style="left:1609.00px;top:579.00px;" width="36.00" height="26.00" viewBox="0 0 36 26"><path d="M6 2Q17.5 1 29 2Q34 2.7 34 7.2V18.5Q34 23 29 23.7Q17.5 24.7 6 23.7Q1.8 23 1.8 18.5V7.2Q1.8 2.7 6 2Z" fill="none" stroke="#fff" stroke-width="3"/><path d="M14.5 8L22.5 12.8L14.5 17.6Z" fill="none" stroke="#fff" stroke-width="3" stroke-linejoin="round"/></svg>
<div class="t" style="left:1660.40px;top:581.46px;font-size:28.41px;color:#fff;letter-spacing:1.150px;">Youtube</div>
<svg class="b" style="left:1610.00px;top:653.00px;" width="34.00" height="36.00" viewBox="0 0 34 36"><rect x="2.8" y="10.5" width="28" height="20.5" rx="3.5" fill="none" stroke="#22c463" stroke-width="3"/><path d="M9 3L16.8 9.5L24.5 3" fill="none" stroke="#22c463" stroke-width="3" stroke-linecap="round" stroke-linejoin="round"/></svg>
<div class="t" style="left:1661.50px;top:657.46px;font-size:28.41px;color:#6f6c83;letter-spacing:-0.833px;">Live</div>
<svg class="b" style="left:1895.00px;top:508.00px;" width="28.00" height="20.00" viewBox="0 0 28 20"><path d="M3 10L10 17L25 3" fill="none" stroke="#fff" stroke-width="3" stroke-linecap="round" stroke-linejoin="round"/></svg>
<svg class="b" style="left:1895.00px;top:584.00px;" width="28.00" height="20.00" viewBox="0 0 28 20"><path d="M3 10L10 17L25 3" fill="none" stroke="#fff" stroke-width="3" stroke-linecap="round" stroke-linejoin="round"/></svg>
</body></html>
